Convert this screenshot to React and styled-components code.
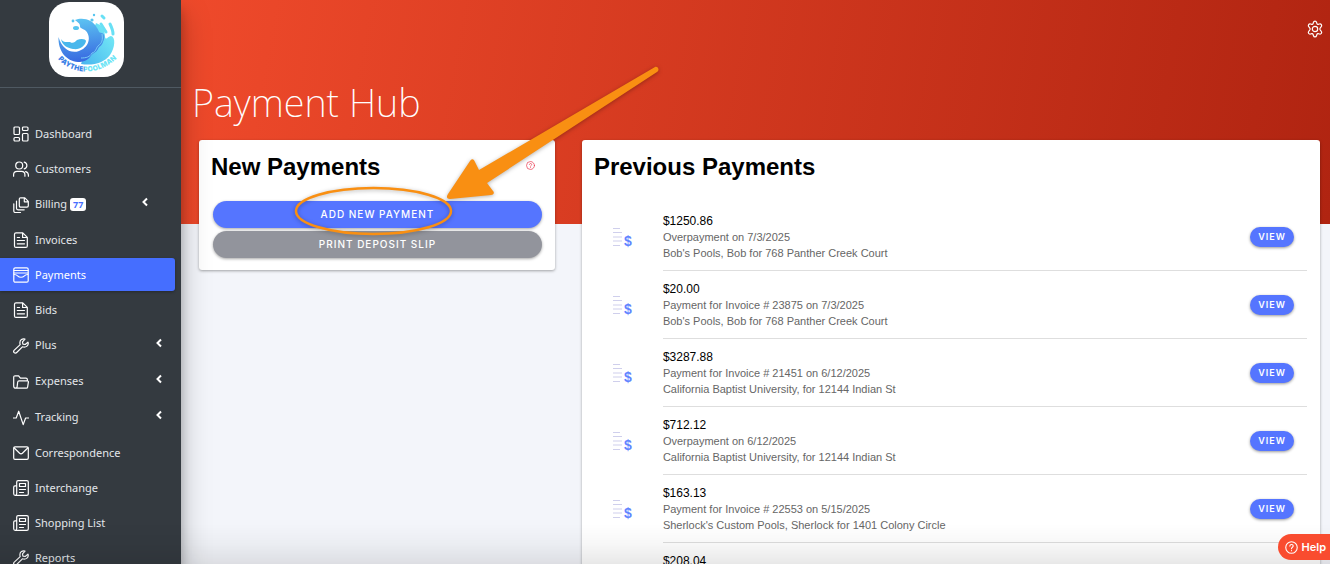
import React from 'react';
import styled, { createGlobalStyle } from 'styled-components';

const colours = {
  sidebar: '#343a40',
  blue: '#456eff',
  button: '#5575ff',
  medium: '#92949c',
  orange: '#f98f12',
};

const GlobalStyle = createGlobalStyle`
  * {
    box-sizing: border-box;
  }

  body {
    margin: 0;
    overflow: hidden;
    background: #f3f5fa;
    font-family: 'Liberation Sans', Arial, sans-serif;
  }

  button {
    font-family: inherit;
    cursor: pointer;
  }
`;

const Page = styled.div`
  display: flex;
  height: 100vh;
  overflow: hidden;
`;

const Sidebar = styled.aside`
  flex: none;
  width: 181px;
  background: ${colours.sidebar};
  box-shadow: 0 14px 28px rgba(0, 0, 0, 0.25), 0 10px 10px rgba(0, 0, 0, 0.22);
  font-family: 'Noto Sans', 'Open Sans', sans-serif;
  z-index: 2;
`;

const Brand = styled.a`
  display: flex;
  justify-content: center;
  padding: 2px 8px 10px 0;
  border-bottom: 1px solid #4f5962;
`;

const BrandTile = styled.span`
  display: block;
  width: 75px;
  height: 75px;
  border-radius: 20px;
  background: white;
`;

const Menu = styled.ul`
  display: flex;
  flex-direction: column;
  gap: 2px;
  margin: 0;
  padding: 29px 6px 0 0;
  list-style: none;
`;

const MenuLink = styled.a`
  display: flex;
  align-items: center;
  height: ${({ $parent }) => ($parent ? '34px' : '33px')};
  padding: 0 ${({ $badge }) => ($badge ? '26px' : '12px')} 0 13px;
  border-radius: 0 3px 3px 0;
  color: ${({ $active }) => ($active ? 'white' : '#e3e6ea')};
  background: ${({ $active }) => ($active ? colours.blue : 'transparent')};
  box-shadow: ${({ $active }) => ($active ? '0 1px 3px rgba(0, 0, 0, 0.3)' : 'none')};
  font-size: 11px;
  line-height: 16px;
  text-decoration: none;

  > svg {
    flex: none;
    margin-top: 1px;
  }
`;

const MenuLabel = styled.span`
  margin-left: 6px;
`;

const Badge = styled.span`
  margin-left: 3px;
  padding: 0 3px;
  border-radius: 3px;
  background: white;
  color: ${colours.blue};
  font-size: 9px;
  line-height: 13px;
  font-weight: 700;
`;

const Arrow = styled.svg`
  margin-left: auto;
  && {
    margin-top: -5px;
  }
`;

const Main = styled.main`
  flex: 1;
  min-width: 0;
  background:
    linear-gradient(100deg, #ef4a2b 0%, #b02411 100%) no-repeat top / 100% 224px,
    #f3f5fa;
`;

const Toolbar = styled.header`
  display: flex;
  justify-content: flex-end;
  padding: 20px 6px 0 0;
`;

const IconButton = styled.button`
  display: flex;
  padding: 0;
  border: 0;
  background: none;
  color: white;
`;

const HintButton = styled(IconButton)`
  padding-bottom: 3px;
  color: #eb445a;
`;

const Title = styled.h1`
  margin: 0;
  padding: 35px 0 9px 11px;
  color: white;
  font-family: 'Noto Sans', 'Open Sans', sans-serif;
  font-size: 38px;
  line-height: 58px;
  font-weight: 200;
`;

const Columns = styled.div`
  display: grid;
  grid-template-columns: 27fr 56fr;
  align-items: start;
  gap: 27px;
  padding: 0 10px 0 18px;
`;

const Card = styled.section`
  border-radius: 3px;
  background: white;
  box-shadow: 0 1px 3px rgba(0, 0, 0, 0.35);
`;

const CardHeader = styled.div`
  display: flex;
  align-items: center;
  justify-content: space-between;
  padding: 12px 20px 0 12px;
`;

const CardTitle = styled.h2`
  margin: 0;
  color: black;
  font-size: 24px;
  line-height: 30px;
  font-weight: 700;
`;

const Actions = styled.div`
  display: flex;
  flex-direction: column;
  gap: 3px;
  padding: 19px 13px 12px 14px;
`;

const ActionButton = styled.button`
  height: 27px;
  padding: 0 0 1px;
  border: 0;
  border-radius: 14px;
  background: ${({ $secondary }) => ($secondary ? colours.medium : colours.button)};
  box-shadow: 0 1px 3px rgba(0, 0, 0, 0.35);
  color: white;
  font-family: Inter, 'Liberation Sans', sans-serif;
  font-size: 10px;
  font-weight: 500;
  line-height: 16px;
  letter-spacing: 1px;
`;

const PaymentList = styled.ul`
  margin: 0;
  padding: 21px 13px 0 30px;
  list-style: none;
`;

const PaymentRow = styled.li`
  display: flex;
  align-items: center;
  gap: 30px;

  > svg {
    flex: none;
  }
`;

const PaymentBody = styled.div`
  flex: 1;
  display: flex;
  align-items: center;
  justify-content: space-between;
  height: 68px;
  padding-right: 13px;
  border-bottom: 1px solid #dedede;
`;

const PaymentText = styled.div`
  padding-top: 1px;
`;

const Amount = styled.h3`
  margin: 0;
  color: black;
  font-size: 12px;
  line-height: 16px;
  font-weight: 400;
`;

const Detail = styled.p`
  margin: 0;
  color: #666;
  font-size: 11px;
  line-height: 16px;
`;

const ViewButton = styled.button`
  width: 44px;
  height: 20px;
  padding: 0;
  border: 0;
  border-radius: 10px;
  background: ${colours.button};
  box-shadow: 0 1px 3px rgba(0, 0, 0, 0.4);
  color: white;
  font-family: Inter, 'Liberation Sans', sans-serif;
  font-size: 9px;
  font-weight: 600;
  line-height: 12px;
  letter-spacing: 1px;
`;

const BottomShade = styled.div`
  position: fixed;
  right: 0;
  bottom: 0;
  left: 0;
  height: 40px;
  background: linear-gradient(transparent, rgba(0, 0, 0, 0.03) 50%, rgba(0, 0, 0, 0.09));
  pointer-events: none;
  z-index: 3;
`;

const HelpButton = styled.button`
  position: fixed;
  right: 0;
  bottom: 4px;
  display: flex;
  align-items: center;
  gap: 4px;
  height: 26px;
  padding: 0 4px 0 7px;
  border: 0;
  border-radius: 13px 0 0 13px;
  background: #f94c2f;
  color: white;
  font-family: Inter, sans-serif;
  font-size: 11px;
  font-weight: 600;
  z-index: 4;
`;

const Annotation = styled.svg`
  position: absolute;
  top: 60px;
  left: 290px;
  pointer-events: none;
  filter: drop-shadow(0 1px 2px rgba(0, 0, 0, 0.3));
  z-index: 5;
`;

const iconShapes = {
  dashboard: (
    <>
      <rect x="1" y="1" width="5.5" height="7.5" rx="1" />
      <rect x="1" y="11.5" width="5.5" height="3.5" rx="1" />
      <rect x="9.5" y="1" width="5.5" height="3.5" rx="1" />
      <rect x="9.5" y="7.5" width="5.5" height="7.5" rx="1" />
    </>
  ),
  customers: (
    <>
      <circle cx="6.2" cy="4.5" r="3.5" />
      <path d="M.6 15.2v-1.4c0-2 1.5-3.4 3.5-3.4h4.400c2 0 3.400 1.400 3.400 3.400v1.400M11.200 1.100a3.500 3.500 0 0 1 0 6.800M12.600 10.600c1.800.5 2.800 1.800 2.800 3.500v1.100" />
    </>
  ),
  billing: (
    <>
      <path d="M7.600.8h4.200l3.500 3.500v4.500c0 .8-.5 1.300-1.300 1.300H7.600c-.8 0-1.300-.5-1.300-1.300V2.100c0-.8.5-1.300 1.300-1.300zM11.300 1v3.800h3.800" />
      <path d="M3.500 4v7.300c0 .9.6 1.500 1.500 1.500h6.200M.8 6.800V14c0 .9.6 1.500 1.500 1.500h5.200" />
    </>
  ),
  document: (
    <>
      <path d="M3 .8h6.800l4.500 4.500v8.600c0 .9-.6 1.500-1.500 1.500H3c-.9 0-1.500-.6-1.500-1.500V2.300C1.500 1.400 2.100.8 3 .8zM9.600 1v4.500h4.600" />
      <path d="M4.300 5.500h2.200M4.300 8.500h7.200M4.300 11.800h7.200" />
    </>
  ),
  payments: (
    <>
      <rect x=".8" y=".8" width="14.4" height="14.4" rx="1.5" />
      <path d="M1 3.500h14M1 6h14M1.200 7.500c2 0 2.600.4 3.400 1.300 1.900 1.900 4.900 1.900 6.800 0 .8-.9 1.400-1.300 3.400-1.300" />
    </>
  ),
  wrench: (
    <path d="M15 4.100 12.200 6.500l-2.300-.4-.4-2.300 2.500-2.700C9.600.2 6.700 2 6.900 5c0 .6.100 1 .3 1.600L1.300 12.100c-.8.8-.8 1.800-.1 2.500.7.700 1.800.7 2.500-.1L9.400 8.800c3.500 1.200 6.700-1.400 5.600-4.700z" />
  ),
  folder: (
    <path d="M2.800 14.200c-1.300 0-2.100-.7-2.100-2V3.200c0-.9.500-1.400 1.400-1.400h3.500l1.800 2.400h5.500c.9 0 1.500.6 1.500 1.500v1.100M2.800 14.200h10.500c.7 0 1.200-.4 1.300-1.100l.8-4.900c.1-.8-.3-1.300-1-1.300H6c-.7 0-1.200.4-1.300 1.100l-.6 4.900c-.1.800-.6 1.300-1.300 1.300z" />
  ),
  pulse: <path d="M.5 8h2.700L5.700 1.200 10.200 14.600 12.600 8h2.900" />,
  mail: (
    <>
      <rect x=".7" y="1.9" width="14.6" height="12.4" rx="1.3" />
      <path d="m1 2.800 5.600 5.500c.9.800 1.900.8 2.800 0L15 2.800" />
    </>
  ),
  news: (
    <>
      <path d="M2.100 15.300h11.800c.8 0 1.400-.6 1.400-1.400V2.100c0-.8-.6-1.400-1.400-1.400H5.100c-.8 0-1.400.6-1.400 1.400v11.700c0 2-3 2-3 0V7.300c0-.8.5-1.400 1.300-1.400h1.500" />
      <rect x="6.5" y="3.5" width="6" height="3" />
      <path d="M6.500 9.500h6M6.500 12.500h4" />
    </>
  ),
};

const Icon = ({ name }) => (
  <svg
    width="16"
    height="16"
    viewBox="0 0 16 16"
    fill="none"
    stroke="white"
    strokeWidth="1.2"
    strokeLinecap="round"
    strokeLinejoin="round"
    aria-hidden="true"
  >
    { iconShapes[name] }
  </svg>
);

const QuestionIcon = ({ size }) => (
  <svg width={size} height={size} viewBox="0 0 12 12" fill="none" stroke="currentColor" strokeLinecap="round" aria-hidden="true">
    <circle cx="6" cy="6" r="5.3" />
    <path d="M4.500 4.700c0-2 3.100-2 3.100 0C7.600 5.800 6 5.800 6 7.100M6 8.800v.1" />
  </svg>
);

const GearIcon = () => (
  <svg width="18" height="18" viewBox="0 0 18 18" fill="none" stroke="currentColor" strokeWidth="1.2" strokeLinejoin="round" aria-hidden="true">
    <path d="M7.400 2.500c.5-1.900 2.700-1.900 3.200 0l.3 1c.2.600.7.900 1.300.8l1.200-.3c1.900-.4 3 1.500 1.700 2.900l-.8.9c-.5.600-.5 1.800 0 2.400l.8.900c1.300 1.400.2 3.300-1.700 2.900l-1.200-.3c-.6-.1-1.100.2-1.300.8l-.3 1c-.5 1.900-2.700 1.900-3.200 0l-.3-1c-.2-.6-.7-.9-1.300-.8l-1.200.3c-1.900.4-3-1.500-1.700-2.900l.8-.9c.5-.6.5-1.800 0-2.400l-.8-.9C1.600 5.500 2.700 3.600 4.600 4l1.200.3c.6.1 1.100-.2 1.300-.8z" />
    <circle cx="9" cy="9" r="2.7" />
  </svg>
);

const InvoiceIcon = () => (
  <svg width="21" height="22" viewBox="0 0 21 22" aria-hidden="true">
    <path d="M1 2.500h7M1 6.500h9M1 11h9M1 15h9M1 19.500h7" stroke="#cfcfec" />
    <text x="12" y="20" fill="#6284ff" fontFamily="Liberation Sans" fontSize="14" fontWeight="700">$</text>
  </svg>
);

const Logo = () => (
  <svg width="75" height="75" viewBox="0 0 75 75" role="img" aria-label="Pay The Pool Man">
    <defs>
      <linearGradient id="wave" x1="0.5" y1="0" x2="0.6" y2="1">
        <stop offset="0" stopColor="#5cc3f2" />
        <stop offset="1" stopColor="#3767e0" />
      </linearGradient>
      <linearGradient id="foam" x1="1" y1="0" x2="0" y2="1">
        <stop offset="0" stopColor="#7af2f7" />
        <stop offset="1" stopColor="#48b4ee" />
      </linearGradient>
      <linearGradient id="lettering">
        <stop offset="0.44" stopColor="#397ee5" />
        <stop offset="0.46" stopColor="#6ee4f5" />
      </linearGradient>
      <path id="name-arc" d="M9 57C24 74 51 74 69 55" />
    </defs>
    <path d="M47 21c6 2 9 7 9 14 1 4 3-1 6-1 5 1 4 12-1 19-6 8-17 11-29 9z" fill="url(#foam)" />
    <path d="M26 18c7-3 18-1 22 8 2 2 1 5 5 5 3 1 3 5 1 9-1 4-4 4-5 7-2 4-6 4-8 8-2 3-7 5-12 5C17 59 9 49 9.500 35 13 47 22 52 30 49c9-3 13-13 7-20-3-3-6-2-6-5s-3-4-5-6z" fill="url(#wave)" />
    <path d="M53 32c1 6 0 9-4 12-2 2-2 6-6 7-2 4-6 5-11 5" fill="none" stroke="#78ccf6" />
    <path d="M12 37c2 4 6 3 9 3 3 2 5 0 7-2 4-2 9-1 9 1-1 5-6 9-13 8-6-1-11-4-12-10z" fill="#48b7ec" />
    <path d="M53 14l2 2M52 22l5 8M61 22c2 4 3 7 3 10" fill="none" stroke="#68e0f5" strokeWidth="3" strokeLinecap="round" />
    <g fill="#57c5ef">
      <ellipse cx="27" cy="26" rx="3" ry="2" />
      <circle cx="24" cy="19" r="1.4" />
      <circle cx="45" cy="13" r="1.2" />
      <circle cx="43" cy="18" r="1.6" />
    </g>
    <text fontFamily="Inter, sans-serif" fontSize="7" fontWeight="900" fill="url(#lettering)" stroke="white" strokeWidth="1" paintOrder="stroke">
      <textPath href="#name-arc">PAYTHEPOOLMAN</textPath>
    </text>
  </svg>
);

const routes = [
  { name: 'Dashboard', icon: 'dashboard' },
  { name: 'Customers', icon: 'customers' },
  { name: 'Billing', icon: 'billing', parent: true, badge: 77 },
  { name: 'Invoices', icon: 'document' },
  { name: 'Payments', icon: 'payments', active: true },
  { name: 'Bids', icon: 'document' },
  { name: 'Plus', icon: 'wrench', parent: true },
  { name: 'Expenses', icon: 'folder', parent: true },
  { name: 'Tracking', icon: 'pulse', parent: true },
  { name: 'Correspondence', icon: 'mail' },
  { name: 'Interchange', icon: 'news' },
  { name: 'Shopping List', icon: 'news' },
  { name: 'Reports', icon: 'wrench' },
];

const payments = [
  { amount: '$1250.86', detail: 'Overpayment on 7/3/2025', customer: "Bob's Pools, Bob for 768 Panther Creek Court" },
  { amount: '$20.00', detail: 'Payment for Invoice # 23875 on 7/3/2025', customer: "Bob's Pools, Bob for 768 Panther Creek Court" },
  { amount: '$3287.88', detail: 'Payment for Invoice # 21451 on 6/12/2025', customer: 'California Baptist University, for 12144 Indian St' },
  { amount: '$712.12', detail: 'Overpayment on 6/12/2025', customer: 'California Baptist University, for 12144 Indian St' },
  { amount: '$163.13', detail: 'Payment for Invoice # 22553 on 5/15/2025', customer: "Sherlock's Custom Pools, Sherlock for 1401 Colony Circle" },
  { amount: '$208.04' },
];

const MenuItem = ({ route }) => (
  <li>
    <MenuLink
      href="#"
      $active={route.active}
      $parent={route.parent}
      $badge={Boolean(route.badge)}
      aria-current={route.active ? 'page' : undefined}
    >
      <Icon name={route.icon} />
      <MenuLabel>{ route.name }</MenuLabel>
      { route.badge && <Badge>{ route.badge }</Badge> }
      {
        route.parent && (
          <Arrow width="8" height="10" viewBox="0 0 8 10" fill="none" stroke="white" strokeWidth="2" aria-hidden="true">
            <path d="M6 1.500 2.500 5 6 8.500" />
          </Arrow>
        )
      }
    </MenuLink>
  </li>
);

const Payment = ({ payment }) => (
  <PaymentRow>
    <InvoiceIcon />
    <PaymentBody>
      <PaymentText>
        <Amount>{ payment.amount }</Amount>
        <Detail>{ payment.detail || '\u00a0' }</Detail>
        <Detail>{ payment.customer || '\u00a0' }</Detail>
      </PaymentText>
      <ViewButton type="button">VIEW</ViewButton>
    </PaymentBody>
  </PaymentRow>
);

const App = () => (
  <>
    <GlobalStyle />
    <Page>
      <Sidebar>
        <Brand href="#">
          <BrandTile><Logo /></BrandTile>
        </Brand>
        <nav>
          <Menu>
            { routes.map(route => <MenuItem route={route} key={route.name} />) }
          </Menu>
        </nav>
      </Sidebar>
      <Main>
        <Toolbar>
          <IconButton type="button" aria-label="Settings"><GearIcon /></IconButton>
        </Toolbar>
        <Title>Payment Hub</Title>
        <Columns>
          <Card>
            <CardHeader>
              <CardTitle>New Payments</CardTitle>
              <HintButton type="button" aria-label="About new payments">
                <QuestionIcon size={9} />
              </HintButton>
            </CardHeader>
            <Actions>
              <ActionButton type="button">ADD NEW PAYMENT</ActionButton>
              <ActionButton type="button" $secondary>PRINT DEPOSIT SLIP</ActionButton>
            </Actions>
          </Card>
          <Card>
            <CardHeader>
              <CardTitle>Previous Payments</CardTitle>
            </CardHeader>
            <PaymentList>
              { payments.map(payment => <Payment payment={payment} key={payment.amount} />) }
            </PaymentList>
          </Card>
        </Columns>
      </Main>
    </Page>
    <Annotation width="380" height="180" viewBox="290 60 380 180" aria-hidden="true">
      <ellipse cx="373.5" cy="211" rx="77.5" ry="23" fill="none" stroke={colours.orange} strokeWidth="2.5" />
      <path d="M655 67c3-1 5 3 2 5L487 183l6 8c2 2 0 4-2 4l-41 4c-3 0-4-2-2-5l22-33c2-3 4-2 5 1l4 8z" fill={colours.orange} />
    </Annotation>
    <BottomShade />
    <HelpButton type="button">
      <QuestionIcon size={13} />
      Help
    </HelpButton>
  </>
);

export default App;
